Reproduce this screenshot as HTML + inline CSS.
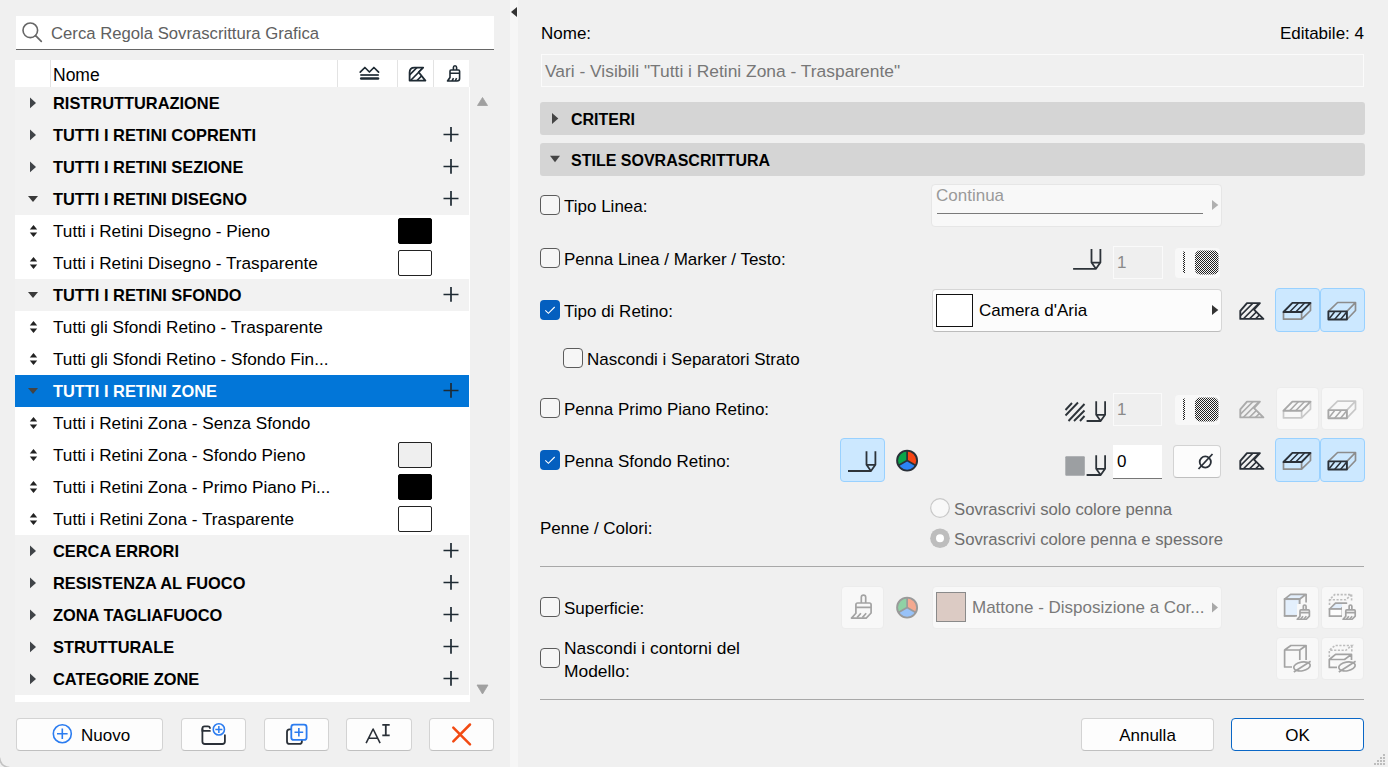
<!DOCTYPE html><html><head><meta charset="utf-8"><style>
*{box-sizing:border-box;margin:0;padding:0}
html,body{width:1388px;height:767px;overflow:hidden;background:#f0f0f0;font-family:"Liberation Sans",sans-serif;color:#000}
.a{position:absolute}
.t{position:absolute;white-space:nowrap;font-size:17px;line-height:32px}
.b{font-weight:bold;font-size:16.4px}
svg{position:absolute;overflow:visible}
.row{position:absolute;left:15px;width:454px;height:32px}
.g{background:#f2f2f2}
.w{background:#fff}
.sel{background:#0276d8}
.sw{position:absolute;width:34px;height:26px;border:1.5px solid #111;border-radius:2px}
.btn{position:absolute;top:718px;height:33px;background:#fdfdfd;border:1px solid #d3d3d3;border-radius:4px;border-bottom-color:#c0c0c0}
.cb{position:absolute;width:20px;height:20px;border:1.3px solid #5c5c5c;border-radius:4px;background:#f6f6f6}
.cbx{position:absolute;width:20px;height:20px;border-radius:4px;background:#045fbf}
.fld{position:absolute;border-radius:4px}
</style></head><body>
<div class="a" style="left:16px;top:16px;width:478px;height:34px;background:#fff;border-bottom:1px solid #666"></div>
<svg style="left:0;top:0" width="60" height="60"><circle cx="30.3" cy="30.3" r="7.3" fill="none" stroke="#666" stroke-width="1.6"/><line x1="35.6" y1="35.6" x2="41.3" y2="41.3" stroke="#666" stroke-width="1.7" stroke-linecap="round"/></svg>
<div class="t" style="left:51px;top:17.7px;color:#606060;font-size:16.7px">Cerca Regola Sovrascrittura Grafica</div>
<div class="a" style="left:15px;top:60px;width:454px;height:27px;background:#fff"></div>
<div class="a" style="left:50px;top:60px;width:1px;height:27px;background:#e3e3e3"></div>
<div class="a" style="left:337px;top:60px;width:1px;height:27px;background:#e3e3e3"></div>
<div class="a" style="left:397px;top:60px;width:1px;height:27px;background:#e3e3e3"></div>
<div class="a" style="left:433px;top:60px;width:1px;height:27px;background:#e3e3e3"></div>
<div class="t" style="left:53px;top:59px;font-size:17.5px">Nome</div>
<svg style="left:0;top:0" width="470" height="90"><path d="M360.2 72.2 L364.9 67.5 L369.4 72 L373.9 67.5 L378.6 72.2" fill="none" stroke="#1e2a33" stroke-width="1.7" stroke-linecap="round" stroke-linejoin="round"/><path d="M360.3 75 H378.8" stroke="#1e2a33" stroke-width="1.7"/><path d="M361.2 78.6 H378" stroke="#1e2a33" stroke-width="2.5" stroke-linecap="round"/><clipPath id="hh"><path d="M414.4 67.6 H423.2 L418.7 72.2 L425.4 80.6 H409.6 V72.5 Q409.6 67.6 414.4 67.6Z"/></clipPath><path d="M403.5 81 L418.5 66 M410 81 L425 66 M416.5 81 L431.5 66" stroke="#1e2a33" stroke-width="1.6" clip-path="url(#hh)"/><path d="M414.4 67.6 H423.2 L418.7 72.2 L425.4 80.6 H409.6 V72.5 Q409.6 67.6 414.4 67.6Z" fill="none" stroke="#1e2a33" stroke-width="1.8" stroke-linejoin="round"/><path d="M453.4 70 V67.5 Q453.4 65.8 455 65.8 Q456.6 65.8 456.6 67.5 V70 M451 70 H458.5 Q459.6 70 459.6 71.2 V78.5 Q459.6 81 457 81 H447.5 Q449 79 450 77.5 V71.2 Q450 70 451 70 M450 73.3 H459.6 M452 81 L453.5 78.2 M455.2 81 L456.6 78.2" fill="none" stroke="#1e2a33" stroke-width="1.6" stroke-linejoin="round"/></svg>
<div class="row g" style="top:87px"></div>
<svg style="left:0;top:87px" width="40" height="32"><path d="M30 10.6 L36 15.9 L30 21.2Z" fill="#404448"/></svg>
<div class="t b" style="left:53px;top:87px;color:#000">RISTRUTTURAZIONE</div>
<div class="row g" style="top:119px"></div>
<svg style="left:0;top:119px" width="40" height="32"><path d="M30 10.6 L36 15.9 L30 21.2Z" fill="#404448"/></svg>
<div class="t b" style="left:53px;top:119px;color:#000">TUTTI I RETINI COPRENTI</div>
<svg style="left:0;top:119px" width="470" height="32"><path d="M451 8 V22.8 M443.5 15.5 H458.5" stroke="#1e2a33" stroke-width="1.7"/></svg>
<div class="row g" style="top:151px"></div>
<svg style="left:0;top:151px" width="40" height="32"><path d="M30 10.6 L36 15.9 L30 21.2Z" fill="#404448"/></svg>
<div class="t b" style="left:53px;top:151px;color:#000">TUTTI I RETINI SEZIONE</div>
<svg style="left:0;top:151px" width="470" height="32"><path d="M451 8 V22.8 M443.5 15.5 H458.5" stroke="#1e2a33" stroke-width="1.7"/></svg>
<div class="row g" style="top:183px"></div>
<svg style="left:0;top:183px" width="40" height="32"><path d="M28 13 L38 13 L33 19Z" fill="#3a3a3a"/></svg>
<div class="t b" style="left:53px;top:183px;color:#000">TUTTI I RETINI DISEGNO</div>
<svg style="left:0;top:183px" width="470" height="32"><path d="M451 8 V22.8 M443.5 15.5 H458.5" stroke="#1e2a33" stroke-width="1.7"/></svg>
<div class="row w" style="top:215px"></div>
<svg style="left:0;top:215px" width="40" height="32"><path d="M29.8 14.5 L33.5 10 L37.2 14.5Z M29.8 17.5 L33.5 22 L37.2 17.5Z" fill="#222"/></svg>
<div class="t" style="left:53px;top:215px;font-size:17.2px">Tutti i Retini Disegno - Pieno</div>
<div class="sw" style="left:398px;top:218px;background:#000;border-color:#000"></div>
<div class="row w" style="top:247px"></div>
<svg style="left:0;top:247px" width="40" height="32"><path d="M29.8 14.5 L33.5 10 L37.2 14.5Z M29.8 17.5 L33.5 22 L37.2 17.5Z" fill="#222"/></svg>
<div class="t" style="left:53px;top:247px;font-size:17.2px">Tutti i Retini Disegno - Trasparente</div>
<div class="sw" style="left:398px;top:250px;background:#fff;border-color:#222"></div>
<div class="row g" style="top:279px"></div>
<svg style="left:0;top:279px" width="40" height="32"><path d="M28 13 L38 13 L33 19Z" fill="#3a3a3a"/></svg>
<div class="t b" style="left:53px;top:279px;color:#000">TUTTI I RETINI SFONDO</div>
<svg style="left:0;top:279px" width="470" height="32"><path d="M451 8 V22.8 M443.5 15.5 H458.5" stroke="#1e2a33" stroke-width="1.7"/></svg>
<div class="row w" style="top:311px"></div>
<svg style="left:0;top:311px" width="40" height="32"><path d="M29.8 14.5 L33.5 10 L37.2 14.5Z M29.8 17.5 L33.5 22 L37.2 17.5Z" fill="#222"/></svg>
<div class="t" style="left:53px;top:311px;font-size:17.2px">Tutti gli Sfondi Retino - Trasparente</div>
<div class="row w" style="top:343px"></div>
<svg style="left:0;top:343px" width="40" height="32"><path d="M29.8 14.5 L33.5 10 L37.2 14.5Z M29.8 17.5 L33.5 22 L37.2 17.5Z" fill="#222"/></svg>
<div class="t" style="left:53px;top:343px;font-size:17.2px">Tutti gli Sfondi Retino - Sfondo Fin...</div>
<div class="row sel" style="top:375px"></div>
<svg style="left:0;top:375px" width="40" height="32"><path d="M28 13 L38 13 L33 19Z" fill="#444"/></svg>
<div class="t b" style="left:53px;top:375px;color:#fff">TUTTI I RETINI ZONE</div>
<svg style="left:0;top:375px" width="470" height="32"><path d="M451 8 V22.8 M443.5 15.5 H458.5" stroke="#1e2a33" stroke-width="1.7"/></svg>
<div class="row w" style="top:407px"></div>
<svg style="left:0;top:407px" width="40" height="32"><path d="M29.8 14.5 L33.5 10 L37.2 14.5Z M29.8 17.5 L33.5 22 L37.2 17.5Z" fill="#222"/></svg>
<div class="t" style="left:53px;top:407px;font-size:17.2px">Tutti i Retini Zona - Senza Sfondo</div>
<div class="row w" style="top:439px"></div>
<svg style="left:0;top:439px" width="40" height="32"><path d="M29.8 14.5 L33.5 10 L37.2 14.5Z M29.8 17.5 L33.5 22 L37.2 17.5Z" fill="#222"/></svg>
<div class="t" style="left:53px;top:439px;font-size:17.2px">Tutti i Retini Zona - Sfondo Pieno</div>
<div class="sw" style="left:398px;top:442px;background:#efefef;border-color:#222"></div>
<div class="row w" style="top:471px"></div>
<svg style="left:0;top:471px" width="40" height="32"><path d="M29.8 14.5 L33.5 10 L37.2 14.5Z M29.8 17.5 L33.5 22 L37.2 17.5Z" fill="#222"/></svg>
<div class="t" style="left:53px;top:471px;font-size:17.2px">Tutti i Retini Zona - Primo Piano Pi...</div>
<div class="sw" style="left:398px;top:474px;background:#000;border-color:#000"></div>
<div class="row w" style="top:503px"></div>
<svg style="left:0;top:503px" width="40" height="32"><path d="M29.8 14.5 L33.5 10 L37.2 14.5Z M29.8 17.5 L33.5 22 L37.2 17.5Z" fill="#222"/></svg>
<div class="t" style="left:53px;top:503px;font-size:17.2px">Tutti i Retini Zona - Trasparente</div>
<div class="sw" style="left:398px;top:506px;background:#fff;border-color:#222"></div>
<div class="row g" style="top:535px"></div>
<svg style="left:0;top:535px" width="40" height="32"><path d="M30 10.6 L36 15.9 L30 21.2Z" fill="#404448"/></svg>
<div class="t b" style="left:53px;top:535px;color:#000">CERCA ERRORI</div>
<svg style="left:0;top:535px" width="470" height="32"><path d="M451 8 V22.8 M443.5 15.5 H458.5" stroke="#1e2a33" stroke-width="1.7"/></svg>
<div class="row g" style="top:567px"></div>
<svg style="left:0;top:567px" width="40" height="32"><path d="M30 10.6 L36 15.9 L30 21.2Z" fill="#404448"/></svg>
<div class="t b" style="left:53px;top:567px;color:#000">RESISTENZA AL FUOCO</div>
<svg style="left:0;top:567px" width="470" height="32"><path d="M451 8 V22.8 M443.5 15.5 H458.5" stroke="#1e2a33" stroke-width="1.7"/></svg>
<div class="row g" style="top:599px"></div>
<svg style="left:0;top:599px" width="40" height="32"><path d="M30 10.6 L36 15.9 L30 21.2Z" fill="#404448"/></svg>
<div class="t b" style="left:53px;top:599px;color:#000">ZONA TAGLIAFUOCO</div>
<svg style="left:0;top:599px" width="470" height="32"><path d="M451 8 V22.8 M443.5 15.5 H458.5" stroke="#1e2a33" stroke-width="1.7"/></svg>
<div class="row g" style="top:631px"></div>
<svg style="left:0;top:631px" width="40" height="32"><path d="M30 10.6 L36 15.9 L30 21.2Z" fill="#404448"/></svg>
<div class="t b" style="left:53px;top:631px;color:#000">STRUTTURALE</div>
<svg style="left:0;top:631px" width="470" height="32"><path d="M451 8 V22.8 M443.5 15.5 H458.5" stroke="#1e2a33" stroke-width="1.7"/></svg>
<div class="row g" style="top:663px"></div>
<svg style="left:0;top:663px" width="40" height="32"><path d="M30 10.6 L36 15.9 L30 21.2Z" fill="#404448"/></svg>
<div class="t b" style="left:53px;top:663px;color:#000">CATEGORIE ZONE</div>
<svg style="left:0;top:663px" width="470" height="32"><path d="M451 8 V22.8 M443.5 15.5 H458.5" stroke="#1e2a33" stroke-width="1.7"/></svg>
<div class="a" style="left:15px;top:695px;width:455px;height:7px;background:#fff"></div>
<div class="a" style="left:469px;top:87px;width:1px;height:608px;background:#fff"></div>
<svg style="left:0;top:0" width="500" height="700"><path d="M477.5 105.5 L482.5 97.5 L487.5 105.5Z" fill="#a0a0a0" stroke="#a0a0a0" stroke-width="0.8" stroke-linejoin="round"/><path d="M477 685 L482.5 694 L488 685Z" fill="#a0a0a0" stroke="#a0a0a0" stroke-width="0.8" stroke-linejoin="round"/></svg>
<div class="btn" style="left:16px;width:147px"></div>
<svg style="left:0;top:0" width="100" height="767"><circle cx="62.3" cy="733.8" r="9" fill="none" stroke="#2b7cf0" stroke-width="1.6"/><path d="M62.3 728.5 V739.1 M57 733.8 H67.6" stroke="#2b7cf0" stroke-width="1.6"/></svg>
<div class="t" style="left:81px;top:720px">Nuovo</div>
<div class="btn" style="left:181px;width:65px"></div>
<div class="btn" style="left:264px;width:65px"></div>
<div class="btn" style="left:346px;width:66px"></div>
<div class="btn" style="left:429px;width:65px"></div>
<svg style="left:0;top:0" width="500" height="767"><path d="M202.4 729 V741.5 Q202.4 744 205 744 H222.3 Q224.9 744 224.9 741.5 V735.2" fill="none" stroke="#2a3038" stroke-width="1.8" stroke-linecap="round"/><path d="M202.4 731 V728.5 Q202.4 726.3 204.6 726.3 H208 Q209.7 726.3 210 728 M202.4 730.9 H209.9" fill="none" stroke="#2a3038" stroke-width="1.8" stroke-linecap="round"/><circle cx="218.85" cy="729.4" r="5.6" fill="none" stroke="#2b7cf0" stroke-width="1.6"/><path d="M215.3 729.4 H222.4 M218.85 725.9 V732.9" stroke="#2b7cf0" stroke-width="1.5"/><path d="M291.3 729.4 H289.5 Q287 729.4 287 732 V741.4 Q287 743.9 289.5 743.9 H299.4 Q301.9 743.9 301.9 741.4 V739.9" fill="none" stroke="#2a3038" stroke-width="1.8"/><rect x="291.3" y="724.7" width="15.3" height="15.2" rx="2.5" fill="#fdfdfd" stroke="#2b7cf0" stroke-width="1.8"/><path d="M294.5 732.3 H303.2 M298.85 728 V736.6" stroke="#2b7cf0" stroke-width="1.6"/><path d="M366.1 743.1 L373.1 729 L380.1 743.1 M368.4 738.2 H377.8" fill="none" stroke="#2a3038" stroke-width="1.6" stroke-linejoin="round"/><path d="M385.8 725.5 V735 M382.3 724.9 H389.7 M382.3 735.4 H389.7" fill="none" stroke="#2a3038" stroke-width="1.8"/><path d="M453.3 727.6 L470 744.3 M453.3 741.4 L470 724.5" stroke="#f24a12" stroke-width="2.5" stroke-linecap="round"/></svg>
<div class="a" style="left:510px;top:0;width:8px;height:767px;background:#f6f6f6"></div>
<svg style="left:0;top:0" width="520" height="30"><path d="M517 7 L511 12 L517 17Z" fill="#333"/></svg>
<div class="t" style="left:541px;top:17.5px">Nome:</div>
<div class="t" style="right:24px;top:17.5px">Editabile: 4</div>
<div class="a" style="left:541px;top:54px;width:823px;height:33px;border:1px solid #fbfbfb;background:#f0f0f0"></div>
<div class="t" style="left:545px;top:55px;color:#777;font-size:17.4px">Vari - Visibili "Tutti i Retini Zona - Trasparente"</div>
<div class="a" style="left:540px;top:102px;width:825px;height:33px;background:#d5d5d5;border-radius:3px"></div>
<svg style="left:0;top:102px" width="600" height="33"><path d="M552 11 L558.3 16.5 L552 22Z" fill="#444"/></svg>
<div class="t b" style="left:571px;top:103.5px;font-size:16px">CRITERI</div>
<div class="a" style="left:540px;top:143px;width:825px;height:33px;background:#d5d5d5;border-radius:3px"></div>
<svg style="left:0;top:143px" width="600" height="33"><path d="M550 12.8 L560 12.8 L555 19.2Z" fill="#444"/></svg>
<div class="t b" style="left:571px;top:144.5px;font-size:16px">STILE SOVRASCRITTURA</div>
<div class="cb" style="left:540px;top:195px"></div>
<div class="t" style="left:564px;top:190.5px;color:#000">Tipo Linea:</div>
<div class="cb" style="left:540px;top:248px"></div>
<div class="t" style="left:564px;top:243.5px;color:#000">Penna Linea / Marker / Testo:</div>
<div class="cbx" style="left:540px;top:300px"></div>
<svg style="left:540px;top:300px" width="20" height="20"><path d="M5.3 10.3 L8.4 13.3 L14.7 7" fill="none" stroke="#fff" stroke-width="1.1"/></svg>
<div class="t" style="left:564px;top:295.5px;color:#000">Tipo di Retino:</div>
<div class="cb" style="left:563px;top:348px"></div>
<div class="t" style="left:587px;top:343.5px;color:#000">Nascondi i Separatori Strato</div>
<div class="cb" style="left:540px;top:398px"></div>
<div class="t" style="left:564px;top:393.5px;color:#000">Penna Primo Piano Retino:</div>
<div class="cbx" style="left:540px;top:450px"></div>
<svg style="left:540px;top:450px" width="20" height="20"><path d="M5.3 10.3 L8.4 13.3 L14.7 7" fill="none" stroke="#fff" stroke-width="1.1"/></svg>
<div class="t" style="left:564px;top:445.5px;color:#000">Penna Sfondo Retino:</div>
<div class="t" style="left:540px;top:512.5px;color:#000">Penne / Colori:</div>
<div class="cb" style="left:540px;top:597px"></div>
<div class="t" style="left:564px;top:592.5px;color:#000">Superficie:</div>
<div class="cb" style="left:540px;top:648px"></div>
<div class="t" style="left:564px;top:636.5px;line-height:23px;font-size:17.4px">Nascondi i contorni del<br>Modello:</div>
<div class="a" style="left:540px;top:566px;width:824px;height:1px;background:#a8a8a8"></div>
<div class="a" style="left:540px;top:699px;width:824px;height:1px;background:#a8a8a8"></div>
<div class="fld" style="left:931px;top:184px;width:291px;height:43px;background:#f8f8f8;border:1px solid #e6e6e6"></div>
<div class="t" style="left:936px;top:180px;color:#9a9a9a">Continua</div>
<div class="a" style="left:937px;top:213px;width:266px;height:1px;background:#7a7a7a"></div>
<svg style="left:0;top:0" width="1230" height="300"><path d="M1212 200 L1218.3 205 L1212 210Z" fill="#b0b0b0"/></svg>
<svg style="left:0;top:0" width="1230" height="300"><path d="M1073.1 268.8 H1095.95 M1091.5 249.1 V262.6 L1095.95 268.8 L1100.4 262.6 V249.1 M1091.5 262.6 H1100.4" fill="none" stroke="#2d3339" stroke-width="1.8" stroke-linejoin="round" stroke-linecap="butt"/></svg>
<div class="a" style="left:1113px;top:246px;width:50px;height:33px;background:#efefef;border:1px solid #fafafa"></div>
<div class="t" style="left:1117px;top:247px;color:#8a8a8a">1</div>
<svg style="left:0;top:0" width="0" height="0"><defs><pattern id="chk" width="2" height="2" patternUnits="userSpaceOnUse"><rect width="1" height="1" fill="#222"/><rect x="1" y="1" width="1" height="1" fill="#222"/></pattern></defs></svg>
<div class="fld" style="left:1174px;top:247px;width:47px;height:32px;background:#f8f8f8;border:1px solid #f0f0f0"></div>
<svg style="left:0;top:0" width="1230" height="500"><rect x="1183" y="251.5" width="2" height="21.5" fill="url(#chk)"/><rect x="1195" y="250.5" width="23.5" height="24" rx="5" fill="url(#chk)"/></svg>
<div class="fld" style="left:932px;top:289px;width:290px;height:43px;background:#fcfcfc;border:1px solid #d6d6d6;border-bottom-color:#bcbcbc"></div>
<div class="a" style="left:936px;top:294px;width:37px;height:33px;background:#fff;border:1.5px solid #111"></div>
<div class="t" style="left:979px;top:295px">Camera d&#39;Aria</div>
<svg style="left:0;top:0" width="1230" height="340"><path d="M1212 305 L1218.3 310 L1212 315Z" fill="#333"/></svg>
<div class="fld" style="left:1275px;top:288px;width:45px;height:44px;background:#cce8ff;border:1px solid #99d1ff"></div>
<div class="fld" style="left:1320px;top:288px;width:45px;height:44px;background:#cce8ff;border:1px solid #99d1ff"></div>
<svg style="left:0;top:0" width="1388" height="767"><g transform="translate(0,0)"><clipPath id="hc1"><path d="M1247 303.1 H1259.9 L1254 309.6 L1263.4 318.9 H1240.3 V310.9Z"/></clipPath><path d="M1237.1 319 L1257.1 299 M1243.2 319 L1263.2 299 M1249.3 319 L1269.3 299 M1255.4 319 L1275.4 299 " stroke="#2a3038" stroke-width="1.6" clip-path="url(#hc1)"/><path d="M1247 303.1 H1259.9 L1254 309.6 L1263.4 318.9 H1240.3 V310.9Z" fill="none" stroke="#2a3038" stroke-width="1.9" stroke-linejoin="round"/></g><g transform="translate(0.00,0.00)" fill="none" stroke-linejoin="round"><path d="M1283.5 312 V319.2 H1301.6 V312 M1301.6 319.2 L1310.5 310.5 V302.9" stroke="#8c8c8c" stroke-width="1.7"/><path d="M1289.6 312 L1298.5 302.9 M1295.7 312 L1304.6 302.9" stroke="#2a3038" stroke-width="1.5"/><path d="M1283.5 312 L1292.4 302.9 H1310.5 L1301.6 312Z" stroke="#2a3038" stroke-width="1.9"/></g><g transform="translate(0.00,0.00)" fill="none" stroke-linejoin="round"><path d="M1328.4 311.4 L1337.6 302.5 H1355.5 L1346.9 311.4 M1346.9 319.5 L1355.5 310.5 V302.5" stroke="#8c8c8c" stroke-width="1.7"/><path d="M1329.3 318.5 L1334.5 312 M1334.6 319.5 L1341 312 M1340.5 319.5 L1346.5 312.3" stroke="#2a3038" stroke-width="1.5"/><path d="M1328.4 311.4 H1346.9 V319.5 H1328.4Z" stroke="#2a3038" stroke-width="1.9"/></g></svg>
<svg style="left:0;top:0" width="1230" height="500"><path d="M1065.5 410 L1072 403 M1065.5 415.5 L1078 402.5 M1068.5 421 L1084.5 404 M1074 421 L1084.5 410.5 M1080 421 L1084.5 416" stroke="#2d3339" stroke-width="1.9"/><path d="M1086.6 421.0 H1100.65 M1096.2 401.3 V414.8 L1100.65 421.0 L1105.1000000000001 414.8 V401.3 M1096.2 414.8 H1105.1000000000001" fill="none" stroke="#2d3339" stroke-width="1.8" stroke-linejoin="round" stroke-linecap="butt"/></svg>
<div class="a" style="left:1113px;top:393px;width:49px;height:33px;background:#efefef;border:1px solid #fafafa"></div>
<div class="t" style="left:1117px;top:394px;color:#8a8a8a">1</div>
<div class="fld" style="left:1174px;top:394px;width:47px;height:32px;background:#f8f8f8;border:1px solid #f0f0f0"></div>
<svg style="left:0;top:0" width="1230" height="500"><rect x="1183" y="398.5" width="2" height="21.5" fill="url(#chk)"/><rect x="1195" y="397.5" width="23.5" height="24" rx="5" fill="url(#chk)"/></svg>
<div class="fld" style="left:1276px;top:387px;width:43px;height:43px;background:#f8f8f8;border:1px solid #ececec"></div>
<div class="fld" style="left:1321px;top:387px;width:43px;height:43px;background:#f8f8f8;border:1px solid #ececec"></div>
<svg style="left:0;top:0" width="1388" height="767"><g transform="translate(0,98.5)"><clipPath id="hc2"><path d="M1247 303.1 H1259.9 L1254 309.6 L1263.4 318.9 H1240.3 V310.9Z"/></clipPath><path d="M1237.1 319 L1257.1 299 M1243.2 319 L1263.2 299 M1249.3 319 L1269.3 299 M1255.4 319 L1275.4 299 " stroke="#ababab" stroke-width="1.6" clip-path="url(#hc2)"/><path d="M1247 303.1 H1259.9 L1254 309.6 L1263.4 318.9 H1240.3 V310.9Z" fill="none" stroke="#ababab" stroke-width="1.9" stroke-linejoin="round"/></g><g transform="translate(0.00,98.70)" fill="none" stroke-linejoin="round"><path d="M1283.5 312 V319.2 H1301.6 V312 M1301.6 319.2 L1310.5 310.5 V302.9" stroke="#c8c8c8" stroke-width="1.7"/><path d="M1289.6 312 L1298.5 302.9 M1295.7 312 L1304.6 302.9" stroke="#a8a8a8" stroke-width="1.5"/><path d="M1283.5 312 L1292.4 302.9 H1310.5 L1301.6 312Z" stroke="#a8a8a8" stroke-width="1.9"/></g><g transform="translate(0.00,98.70)" fill="none" stroke-linejoin="round"><path d="M1328.4 311.4 L1337.6 302.5 H1355.5 L1346.9 311.4 M1346.9 319.5 L1355.5 310.5 V302.5" stroke="#c8c8c8" stroke-width="1.7"/><path d="M1329.3 318.5 L1334.5 312 M1334.6 319.5 L1341 312 M1340.5 319.5 L1346.5 312.3" stroke="#a8a8a8" stroke-width="1.5"/><path d="M1328.4 311.4 H1346.9 V319.5 H1328.4Z" stroke="#a8a8a8" stroke-width="1.9"/></g></svg>
<div class="fld" style="left:840px;top:438px;width:45px;height:44px;background:#cce8ff;border:1px solid #99d1ff"></div>
<svg style="left:0;top:0" width="1230" height="500"><path d="M848 471.0 H870.95 M866.5 451.3 V464.8 L870.95 471.0 L875.4 464.8 V451.3 M866.5 464.8 H875.4" fill="none" stroke="#2d3339" stroke-width="1.8" stroke-linejoin="round" stroke-linecap="butt"/></svg>
<svg style="left:0;top:0" width="1230" height="767"><path d="M907.1 460.6 L907.10 450.60 A10 10 0 0 1 915.76 465.60Z" fill="#f74514"/><path d="M907.1 460.6 L915.76 465.60 A10 10 0 0 1 898.44 465.60Z" fill="#2c83f5"/><path d="M907.1 460.6 L898.44 465.60 A10 10 0 0 1 907.10 450.60Z" fill="#0aa64a"/><circle cx="907.1" cy="460.6" r="10" fill="none" stroke="#2a3038" stroke-width="1.9"/><path d="M907.10 450.60 L907.1 460.6 L915.76 465.60 M907.1 460.6 L898.44 465.60" stroke="#2a3038" stroke-width="1.7" fill="none"/></svg>
<svg style="left:0;top:0" width="1230" height="500"><rect x="1065.3" y="456.2" width="19.5" height="19.5" rx="1" fill="#9c9fa2"/><path d="M1086.6 475.0 H1100.65 M1096.2 455.3 V468.8 L1100.65 475.0 L1105.1000000000001 468.8 V455.3 M1096.2 468.8 H1105.1000000000001" fill="none" stroke="#2d3339" stroke-width="1.8" stroke-linejoin="round" stroke-linecap="butt"/></svg>
<div class="a" style="left:1113px;top:445px;width:49px;height:34px;background:#fff;border-bottom:1.5px solid #777"></div>
<div class="t" style="left:1117px;top:446px">0</div>
<div class="fld" style="left:1173px;top:445px;width:48px;height:33px;background:#fcfcfc;border:1px solid #d3d3d3;border-bottom-color:#bfbfbf"></div>
<svg style="left:0;top:0" width="1230" height="500"><circle cx="1205.3" cy="462" r="5.6" fill="none" stroke="#2a3038" stroke-width="1.8"/><path d="M1198.5 469 L1212.5 454" stroke="#2a3038" stroke-width="1.8"/></svg>
<div class="fld" style="left:1275px;top:438px;width:45px;height:44px;background:#cce8ff;border:1px solid #99d1ff"></div>
<div class="fld" style="left:1320px;top:438px;width:45px;height:44px;background:#cce8ff;border:1px solid #99d1ff"></div>
<svg style="left:0;top:0" width="1388" height="767"><g transform="translate(0,150)"><clipPath id="hc3"><path d="M1247 303.1 H1259.9 L1254 309.6 L1263.4 318.9 H1240.3 V310.9Z"/></clipPath><path d="M1237.1 319 L1257.1 299 M1243.2 319 L1263.2 299 M1249.3 319 L1269.3 299 M1255.4 319 L1275.4 299 " stroke="#2a3038" stroke-width="1.6" clip-path="url(#hc3)"/><path d="M1247 303.1 H1259.9 L1254 309.6 L1263.4 318.9 H1240.3 V310.9Z" fill="none" stroke="#2a3038" stroke-width="1.9" stroke-linejoin="round"/></g><g transform="translate(0.00,150.00)" fill="none" stroke-linejoin="round"><path d="M1283.5 312 V319.2 H1301.6 V312 M1301.6 319.2 L1310.5 310.5 V302.9" stroke="#8c8c8c" stroke-width="1.7"/><path d="M1289.6 312 L1298.5 302.9 M1295.7 312 L1304.6 302.9" stroke="#2a3038" stroke-width="1.5"/><path d="M1283.5 312 L1292.4 302.9 H1310.5 L1301.6 312Z" stroke="#2a3038" stroke-width="1.9"/></g><g transform="translate(0.00,150.00)" fill="none" stroke-linejoin="round"><path d="M1328.4 311.4 L1337.6 302.5 H1355.5 L1346.9 311.4 M1346.9 319.5 L1355.5 310.5 V302.5" stroke="#8c8c8c" stroke-width="1.7"/><path d="M1329.3 318.5 L1334.5 312 M1334.6 319.5 L1341 312 M1340.5 319.5 L1346.5 312.3" stroke="#2a3038" stroke-width="1.5"/><path d="M1328.4 311.4 H1346.9 V319.5 H1328.4Z" stroke="#2a3038" stroke-width="1.9"/></g></svg>
<svg style="left:0;top:0" width="1230" height="767"><circle cx="940" cy="508" r="9.3" fill="#f8f8f8" stroke="#c8c8c8" stroke-width="1.2"/><circle cx="940" cy="538.2" r="9.8" fill="#bdbdbd"/><circle cx="940" cy="538.2" r="4" fill="#fff"/></svg>
<div class="t" style="left:954px;top:493.5px;color:#6e6e6e;font-size:16.7px">Sovrascrivi solo colore penna</div>
<div class="t" style="left:954px;top:523.5px;color:#6e6e6e;font-size:16.7px">Sovrascrivi colore penna e spessore</div>
<div class="fld" style="left:841px;top:586px;width:43px;height:43px;background:#f8f8f8;border:1px solid #ececec"></div>
<svg style="left:0;top:0" width="1230" height="767"><path d="M907.1 607.6 L907.10 597.60 A10 10 0 0 1 915.76 612.60Z" fill="#f4a990"/><path d="M907.1 607.6 L915.76 612.60 A10 10 0 0 1 898.44 612.60Z" fill="#98c2f8"/><path d="M907.1 607.6 L898.44 612.60 A10 10 0 0 1 907.10 597.60Z" fill="#8fd1a5"/><circle cx="907.1" cy="607.6" r="10" fill="none" stroke="#9a9a9a" stroke-width="1.9"/><path d="M907.10 597.60 L907.1 607.6 L915.76 612.60 M907.1 607.6 L898.44 612.60" stroke="#9a9a9a" stroke-width="1.7" fill="none"/></svg>
<div class="fld" style="left:932px;top:586px;width:290px;height:43px;background:#f8f8f8;border:1px solid #ececec"></div>
<div class="a" style="left:936px;top:592px;width:30px;height:30px;background:#dccbc4;border:1px solid #8a8a8a"></div>
<div class="t" style="left:972px;top:592px;color:#7a7a7a">Mattone - Disposizione a Cor...</div>
<svg style="left:0;top:0" width="1230" height="767"><path d="M1212 602.5 L1218 607.5 L1212 612.5Z" fill="#a8a8a8"/></svg>
<div class="fld" style="left:1276px;top:586px;width:43px;height:43px;background:#f8f8f8;border:1px solid #ececec"></div>
<div class="fld" style="left:1321px;top:586px;width:43px;height:43px;background:#f8f8f8;border:1px solid #ececec"></div>
<div class="fld" style="left:1276px;top:637px;width:43px;height:43px;background:#f8f8f8;border:1px solid #ececec"></div>
<div class="fld" style="left:1321px;top:637px;width:43px;height:43px;background:#f8f8f8;border:1px solid #ececec"></div>
<svg style="left:0;top:0" width="1388" height="767"><g transform="translate(863.5,595.1) scale(1.0)" fill="none" stroke="#a3a3a3" stroke-width="1.70" stroke-linejoin="round"><path d="M-2.2 7.9 V2.2 Q-2.2 0 0 0 Q2.2 0 2.2 2.2 V7.9"/><path d="M-7.6 12.3 V9.6 Q-7.6 7.9 -5.9 7.9 H5.9 Q7.6 7.9 7.6 9.6 V17.9 L2.7 23 H-12 L-7.6 18.1 V12.3 H7.6"/><path d="M-6.5 22.5 L-2.6 18.2 M-1.2 22.5 L2.7 18.2"/></g><path d="M1284.6 599.2 L1290.6 594.3 H1306.1 L1299.5 599.2Z" fill="#e3effc" stroke="#a3a3a3" stroke-width="1.7" stroke-linejoin="round"/><path d="M1284.6 599.2 H1299.5 V608 M1295 615.8 H1284.6Z" fill="#e3effc" stroke="#a3a3a3" stroke-width="1.7" stroke-linejoin="round"/><rect x="1284.6" y="599.2" width="14.9" height="16.6" fill="#e3effc" stroke="#a3a3a3" stroke-width="1.7"/><path d="M1306.1 594.3 V602.6" stroke="#a3a3a3" stroke-width="1.7"/><rect x="1297" y="604" width="14" height="17" fill="#f8f8f8"/><g transform="translate(1304.7,605) scale(0.62)" fill="none" stroke="#a3a3a3" stroke-width="2.74" stroke-linejoin="round"><path d="M-2.2 7.9 V2.2 Q-2.2 0 0 0 Q2.2 0 2.2 2.2 V7.9"/><path d="M-7.6 12.3 V9.6 Q-7.6 7.9 -5.9 7.9 H5.9 Q7.6 7.9 7.6 9.6 V17.9 L2.7 23 H-12 L-7.6 18.1 V12.3 H7.6"/><path d="M-6.5 22.5 L-2.6 18.2 M-1.2 22.5 L2.7 18.2"/></g><path d="M1329.5 605 V599.8 L1334.6 594.6 H1351.6 L1345.8 599.8 H1329.5 M1351.6 594.6 V601.5" fill="none" stroke="#bdbdbd" stroke-width="1.6" stroke-dasharray="2.2 1.5"/><path d="M1329.5 609 L1335.5 603.2 H1346.5 L1341 609Z" fill="#e3effc" stroke="#a3a3a3" stroke-width="1.7" stroke-linejoin="round"/><rect x="1329.5" y="609" width="12.9" height="7.1" fill="#fdfdfd" stroke="#a3a3a3" stroke-width="1.7"/><rect x="1342" y="604" width="12" height="17" fill="#f8f8f8"/><g transform="translate(1350.5,605) scale(0.62)" fill="none" stroke="#a3a3a3" stroke-width="2.74" stroke-linejoin="round"><path d="M-2.2 7.9 V2.2 Q-2.2 0 0 0 Q2.2 0 2.2 2.2 V7.9"/><path d="M-7.6 12.3 V9.6 Q-7.6 7.9 -5.9 7.9 H5.9 Q7.6 7.9 7.6 9.6 V17.9 L2.7 23 H-12 L-7.6 18.1 V12.3 H7.6"/><path d="M-6.5 22.5 L-2.6 18.2 M-1.2 22.5 L2.7 18.2"/></g><path d="M1299.8 660 V650 H1284.6 V667 H1292 M1284.6 650 L1290.9 645.5 H1306.1 L1299.8 650 M1306.1 645.5 V660" fill="none" stroke="#a3a3a3" stroke-width="1.7" stroke-linejoin="round"/><ellipse cx="1302" cy="666.4" rx="8.3" ry="4.4" transform="rotate(-10 1302 666.4)" fill="#f8f8f8" stroke="#a3a3a3" stroke-width="1.7"/><path d="M1293.8 672 L1310.6 661.3" stroke="#a3a3a3" stroke-width="1.7"/><path d="M1329.3 657 V650.3 L1335 645.5 H1351.8 L1345.8 650.3 H1329.3 M1351.8 645.5 V652.5" fill="none" stroke="#bdbdbd" stroke-width="1.6" stroke-dasharray="2.2 1.5"/><path d="M1329.3 659.5 L1335.6 654.4 H1351.5 L1344.5 659.5Z M1329.3 659.5 V667.4 H1337 M1351.5 654.4 V660" fill="#fcfcfc" stroke="#a3a3a3" stroke-width="1.7" stroke-linejoin="round"/><ellipse cx="1347" cy="666.4" rx="8.3" ry="4.4" transform="rotate(-10 1347 666.4)" fill="#f8f8f8" stroke="#a3a3a3" stroke-width="1.7"/><path d="M1338.8 672 L1355.6 661.3" stroke="#a3a3a3" stroke-width="1.7"/></svg>
<svg style="left:0;top:0" width="1388" height="767"><rect x="1383" y="754" width="2" height="2" fill="#bdbdbd"/><rect x="1380" y="757" width="2" height="2" fill="#bdbdbd"/><rect x="1383" y="757" width="2" height="2" fill="#bdbdbd"/><rect x="1377" y="760" width="2" height="2" fill="#bdbdbd"/><rect x="1380" y="760" width="2" height="2" fill="#bdbdbd"/><rect x="1383" y="760" width="2" height="2" fill="#bdbdbd"/><rect x="1374" y="763" width="2" height="2" fill="#bdbdbd"/><rect x="1377" y="763" width="2" height="2" fill="#bdbdbd"/><rect x="1380" y="763" width="2" height="2" fill="#bdbdbd"/><rect x="1383" y="763" width="2" height="2" fill="#bdbdbd"/></svg>
<div class="fld" style="left:1081px;top:718px;width:133px;height:33px;background:#fdfdfd;border:1px solid #d3d3d3;border-bottom-color:#c0c0c0"></div>
<div class="t" style="left:1081px;top:720px;width:133px;text-align:center">Annulla</div>
<div class="fld" style="left:1231px;top:718px;width:133px;height:33px;background:#fdfdfd;border:1.5px solid #0a67c6"></div>
<div class="t" style="left:1231px;top:720px;width:133px;text-align:center">OK</div>
<svg style="left:0;top:0" width="30" height="767"><path d="M-0.5 757.5 Q0.5 767 9.5 767.5" fill="none" stroke="#c2c2c2" stroke-width="1.6"/></svg>
</body></html>
